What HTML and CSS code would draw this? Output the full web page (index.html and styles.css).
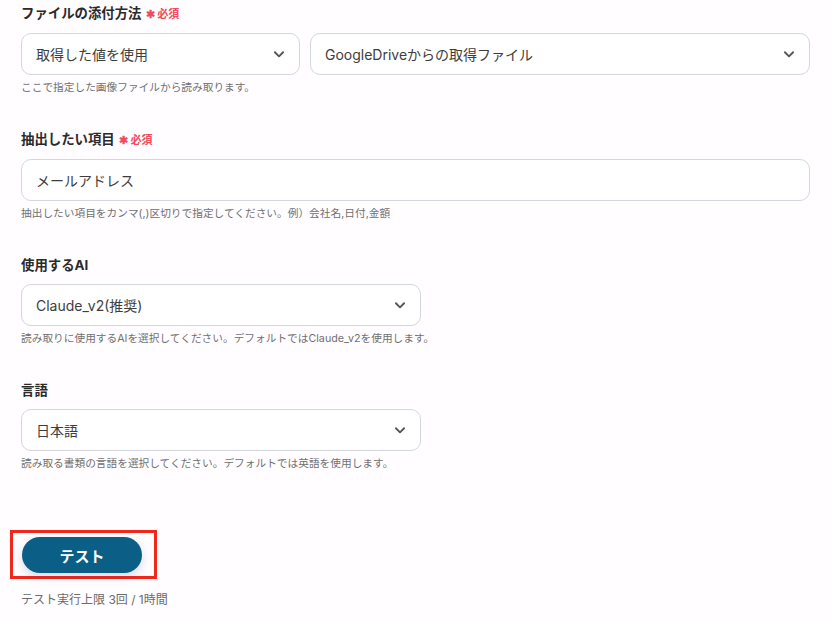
FILE: index.html
```html
<!DOCTYPE html>
<html lang="ja">
<head>
  <meta charset="UTF-8" />
  <title>設定</title>
  <link rel="stylesheet" href="styles.css">
</head>
<body>
  <div class="form">
    <div class="field">
      <div class="label">ファイルの添付方法 <span class="req">✱ 必須</span></div>
      <div class="row">
        <div class="select w-280"><span>取得した値を使用</span><svg class="chev" viewBox="0 0 12 12"><path d="M2.5 4.5 6 8l3.5-3.5"/></svg></div>
        <div class="select grow"><span>GoogleDriveからの取得ファイル</span><svg class="chev" viewBox="0 0 12 12"><path d="M2.5 4.5 6 8l3.5-3.5"/></svg></div>
      </div>
      <div class="help">ここで指定した画像ファイルから読み取ります。</div>
    </div>

    <div class="field">
      <div class="label">抽出したい項目 <span class="req">✱ 必須</span></div>
      <div class="input">メールアドレス</div>
      <div class="help">抽出したい項目をカンマ(,)区切りで指定してください。例）会社名,日付,金額</div>
    </div>

    <div class="field">
      <div class="label">使用するAI</div>
      <div class="select w-400"><span>Claude_v2(推奨)</span><svg class="chev" viewBox="0 0 12 12"><path d="M2.5 4.5 6 8l3.5-3.5"/></svg></div>
      <div class="help">読み取りに使用するAIを選択してください。デフォルトではClaude_v2を使用します。</div>
    </div>

    <div class="field">
      <div class="label">言語</div>
      <div class="select w-400"><span>日本語</span><svg class="chev" viewBox="0 0 12 12"><path d="M2.5 4.5 6 8l3.5-3.5"/></svg></div>
      <div class="help">読み取る書類の言語を選択してください。デフォルトでは英語を使用します。</div>
    </div>

    <div class="actions">
      <div class="highlight">
        <button class="btn">テスト</button>
      </div>
      <div class="limit">テスト実行上限 3回 / 1時間</div>
    </div>
  </div>
</body>
</html>
```

FILE: styles.css
```css
body {
  margin: 0;
  background: #fffdff;
  color: #2b2b2b;
  font-family: "Inter", "Noto Sans CJK JP", sans-serif;
}

.form {
  padding: 4px 22px 0 21px;
  width: 789px;
}

.field {
  margin-bottom: 35px;
}

.label {
  font-size: 13.4px;
  font-weight: 700;
  line-height: 18px;
  margin-bottom: 10px;
  color: #2a2a2a;
}

.req {
  color: #f04a5c;
  font-size: 11px;
  font-weight: 700;
  margin-left: 1px;
}

.row {
  display: flex;
  gap: 10px;
}

.select,
.input {
  box-sizing: border-box;
  height: 42px;
  border: 1px solid #d3d6e0;
  border-radius: 10px;
  background: #fff;
  display: flex;
  align-items: center;
  justify-content: space-between;
  padding: 0 13px 0 14px;
  font-size: 14px;
  color: #3d3d3d;
}

.w-280 { width: 279px; }
.w-400 { width: 400px; }
.grow { flex: 1; }

.chev {
  width: 14px;
  height: 14px;
  fill: none;
  stroke: #555;
  stroke-width: 1.6;
  stroke-linecap: round;
  stroke-linejoin: round;
}

.help {
  font-size: 10.7px;
  color: #707070;
  margin-top: 6px;
  line-height: 14px;
}

.actions {
  padding-top: 24px;
}

.highlight {
  display: inline-block;
  margin-left: -11px;
  padding: 4px 12px 3px 9px;
  border: 3px solid #f2271c;
}

.btn {
  display: block;
  width: 120px;
  height: 36px;
  border: none;
  border-radius: 18px;
  background: #0b5e85;
  color: #fff;
  font-family: inherit;
  font-size: 15px;
  font-weight: 700;
  box-shadow: 0 4px 10px rgba(30, 60, 120, 0.18);
}

.limit {
  margin-top: 11px;
  font-size: 12px;
  color: #6b6b6b;
}
```
